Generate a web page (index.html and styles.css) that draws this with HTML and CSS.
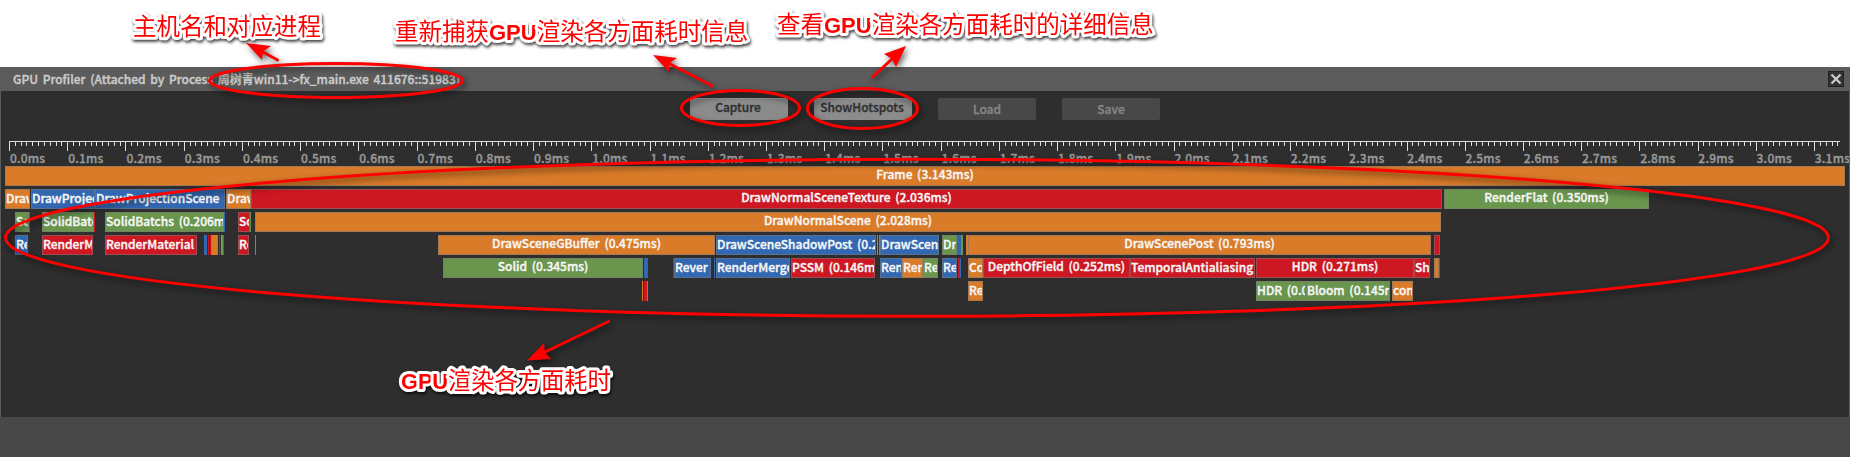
FILE: index.html
```html
<!DOCTYPE html>
<html lang="zh-CN">
<head>
<meta charset="utf-8">
<title>GPU Profiler</title>
<link rel="stylesheet" href="styles.css">
</head>
<body>
<div class="page">
  <div class="window">
    <header class="titlebar">
      <span class="title">GPU Profiler (Attached by Process 周树青win11-&gt;fx_main.exe 411676::51983)</span>
      <button class="close" aria-label="Close"><svg width="14" height="14" viewBox="0 0 14 14"><path d="M2.500 2.500L11.500 11.500M11.500 2.500L2.500 11.500" stroke="#ccc" stroke-width="2.2"/></svg></button>
    </header>
    <main class="body">
      <div class="toolbar">
        <button class="btn on">Capture</button>
        <button class="btn on">ShowHotspots</button>
        <button class="btn">Load</button>
        <button class="btn">Save</button>
      </div>
      <svg class="ruler" id="ruler" width="1840" height="11"></svg>
      <div class="labels" id="labels"></div>
      <div class="chart" id="chart"></div>
    </main>
    <footer class="status"></footer>
  </div>
  <svg class="notes" width="1850" height="457" viewBox="0 0 1850 457">
    <g class="marks">
      <ellipse cx="336" cy="80.5" rx="126.5" ry="17"/>
      <ellipse cx="740.5" cy="108" rx="59" ry="17.5"/>
      <ellipse cx="862.5" cy="108.5" rx="55" ry="20"/>
      <ellipse cx="917" cy="237.7" rx="911.5" ry="78.5"/>
      <path d="M277.500 60L262 51.500M712.500 86L670 64M872.500 77L892 59M608.500 321.500L545 352"/>
      <path class="head" d="M246 43L271 46L263 51.500L262 60ZM653 55L677 58L669 63.500L669 72ZM906 46L896 67L892 59L884 54ZM527 360.500L544 343L545 352L551 359Z"/>
    </g>
    <g class="note">
      <text x="133" y="35" textLength="188">主机名和对应进程</text>
      <text x="395" y="40">重新捕获<tspan class="lat">GPU</tspan>渲染各方面耗时信息</text>
      <text x="777" y="33">查看<tspan class="lat">GPU</tspan>渲染各方面耗时的详细信息</text>
      <text x="401" y="389" textLength="210"><tspan class="lat">GPU</tspan>渲染各方面耗时</text>
    </g>
  </svg>
</div>
<script src="chart.js"></script>
</body>
</html>
```
FILE: styles.css
```css
body { margin: 0; background: #fff; font-family: "Noto Sans CJK SC", sans-serif; }
.page { position: relative; width: 1850px; height: 457px; overflow: hidden; }
.window { display: flex; flex-direction: column; box-sizing: border-box; width: 1850px; height: 457px; padding-top: 67px; font-size: 12px; font-weight: 500; word-spacing: 2px; -webkit-text-stroke: .35px currentColor; }
.titlebar { display: flex; align-items: center; justify-content: space-between; height: 24px; padding: 0 6px 0 13px; background: #5c5c5c; }
.title { line-height: 24px; height: 24px; color: #ccc; white-space: pre; }
.close { display: flex; align-items: center; justify-content: center; width: 16px; height: 16px; box-sizing: border-box; padding: 0; background: #333; border: 1px solid #222; }
.body { height: 326px; background: #2e2e2e; border-left: 1px solid #5c5c5c; border-right: 1px solid #5c5c5c; box-sizing: border-box; overflow: hidden; }
.toolbar { display: flex; gap: 26px; height: 43px; padding: 7px 0 0 689px; box-sizing: border-box; }
.btn { box-sizing: border-box; width: 98px; height: 22px; padding: 0; border: 0; border-radius: 2px; background: #484848; color: #858585; font: 500 12px/20px "Noto Sans CJK SC", sans-serif; -webkit-text-stroke: .35px currentColor; }
.btn.on { background: #8b8b8b; color: #303030; line-height: 16px; padding: 0 2px 5px 0; border-top: 1px solid #999; }
.ruler { display: block; margin-top: 7px; stroke: #ddd; stroke-width: 1; shape-rendering: crispEdges; }
.labels { display: flex; height: 14px; padding-left: 9px; }
.labels span { flex: none; width: 58.23px; line-height: 12px; color: #999; letter-spacing: .2px; white-space: nowrap; }
.labels span:last-child { width: auto; }
.row { display: flex; height: 20px; margin-bottom: 3px; }
.bar { flex: none; box-sizing: border-box; height: 20px; border: 1px solid rgba(120,120,120,.55); overflow: hidden; line-height: 14px; color: #f7f7f7; white-space: pre; text-align: center; }
.bar.cut { text-align: left; line-height: 16px; }
.bar.thin { border: 0; }
.o { background: #d97b29; }
.b { background: #3267b1; }
.r { background: #cd1722; }
.g { background: #69954d; }
.status { height: 40px; background: #484848; }
.notes { position: absolute; left: 0; top: 0; pointer-events: none; }
.marks { fill: none; stroke: #f00; stroke-width: 3; stroke-linecap: round; filter: drop-shadow(2px 3px 3px rgba(0,0,0,.6)); }
.marks .head { fill: #f00; stroke: none; }
.note { font-family: "Noto Sans CJK SC", sans-serif; font-size: 23.5px; font-weight: 400; fill: #f00; stroke: #fff; stroke-width: 6px; stroke-linejoin: round; paint-order: stroke; filter: drop-shadow(1px 2px 1.5px rgba(0,0,0,.75)); }
.note .lat { font-family: "Liberation Sans", Arial, sans-serif; font-size: 22px; font-weight: 700; }
```
FILE: chart.js
```js
// Each bar: [start px, end px, colour, label, label is left-aligned and clipped]
const rows = [
  [[5, 1845, 'o', 'Frame (3.143ms)']],
  [[5, 30, 'o', 'DrawScene', 1], [31, 95, 'b', 'DrawProjection', 1], [95, 225, 'b', 'DrawProjectionScene (0.222ms)', 1], [226, 251, 'o', 'DrawScene', 1], [251, 1442, 'r', 'DrawNormalSceneTexture (2.036ms)'], [1444, 1649, 'g', 'RenderFlat (0.350ms)']],
  [[15, 29, 'g', 'Solid', 1], [29, 30, 'b'], [42, 94, 'g', 'SolidBatchs', 1], [94, 95, 'r'], [105, 224, 'g', 'SolidBatchs (0.206ms)', 1], [224, 225, 'b'], [238, 250, 'r', 'Solid', 1], [250, 251, 'g'], [255, 1441, 'o', 'DrawNormalScene (2.028ms)']],
  [[15, 28, 'b', 'Render', 1], [42, 93, 'r', 'RenderMaterial', 1], [105, 197, 'r', 'RenderMaterial', 1], [204, 207, 'b'], [208, 209, 'r'], [210, 211, 'r'], [211, 212, 'g'], [212, 217, 'o'], [217, 218, 'g'], [219, 220, 'r'], [221, 222, 'o'], [222, 223, 'g'], [223, 224, 'b'], [238, 249, 'r', 'Render', 1], [255, 256, 'g'], [438, 715, 'o', 'DrawSceneGBuffer (0.475ms)'], [716, 876, 'b', 'DrawSceneShadowPost (0.274ms)', 1], [877, 878, 'o'], [879, 880, 'g'], [880, 939, 'b', 'DrawScene', 1], [942, 957, 'g', 'Draw', 1], [957, 961, 'b'], [961, 963, 'g'], [966, 968, 'o'], [968, 1431, 'o', 'DrawScenePost (0.793ms)'], [1434, 1440, 'r', '']],
  [[443, 643, 'g', 'Solid (0.345ms)'], [644, 648, 'b'], [673, 674, 'r'], [674, 711, 'b', 'Rever', 1], [714, 715, 'b'], [716, 790, 'b', 'RenderMerge', 1], [791, 875, 'r', 'PSSM (0.146ms)', 1], [880, 902, 'b', 'Render', 1], [902, 923, 'o', 'Render', 1], [923, 938, 'g', 'Render', 1], [942, 957, 'b', 'Render', 1], [958, 960, 'r'], [960, 961, 'b'], [968, 983, 'o', 'Copy', 1], [983, 1130, 'r', 'DepthOfField (0.252ms)'], [1130, 1255, 'r', 'TemporalAntialiasing', 1], [1256, 1414, 'r', 'HDR (0.271ms)'], [1414, 1430, 'r', 'Sharp', 1], [1434, 1439, 'o', ''], [1439, 1440, 'b']],
  [[642, 643, 'o'], [644, 647, 'r'], [647, 648, 'g'], [968, 983, 'o', 'Render', 1], [1256, 1306, 'g', 'HDR (0.084ms)', 1], [1306, 1390, 'g', 'Bloom (0.145ms)', 1], [1392, 1413, 'o', 'connect', 1]]
];

const chart = document.getElementById('chart');
for (const bars of rows) {
  const row = document.createElement('div');
  row.className = 'row';
  let at = 1;
  for (const [start, end, colour, label, cut] of bars) {
    const bar = document.createElement('div');
    bar.className = 'bar ' + colour + (cut ? ' cut' : '') + (label === undefined ? ' thin' : '');
    bar.style.marginLeft = (start - at) + 'px';
    bar.style.width = (end - start) + 'px';
    bar.textContent = label || '';
    row.append(bar);
    at = end;
  }
  chart.append(row);
}

let d = 'M8 .5H1839';
for (let i = 0; i <= 314; i++) {
  const x = Math.round(8 + i * 5.823) + .5;
  d += 'M' + x + ' 0V' + (i % 10 ? 5 : 10);
}
document.getElementById('ruler').innerHTML = '<path d="' + d + '"/>';
const labels = document.getElementById('labels');
for (let i = 0; i <= 31; i++) {
  const label = document.createElement('span');
  label.textContent = (i / 10).toFixed(1) + 'ms';
  labels.append(label);
}
```
